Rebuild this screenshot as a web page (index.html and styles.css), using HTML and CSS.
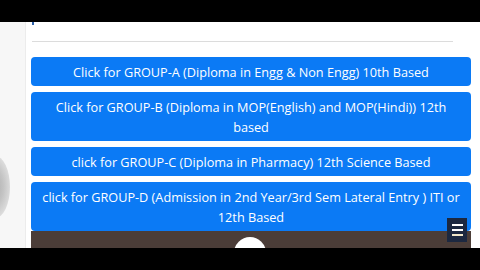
FILE: index.html
```html
<!DOCTYPE html>
<html>
<head>
<meta charset="utf-8">
<link rel="stylesheet" href="styles.css">
</head>
<body>
<div class="screen">
  <div class="topbar"></div>
  <div class="page">
    <div class="left-strip"><div class="blob"></div></div>
    <div class="content">
      <div class="tick"></div>
      <div class="rule"></div>
      <div class="buttons">
        <a class="btn">Click for GROUP-A (Diploma in Engg &amp; Non Engg) 10th Based</a>
        <a class="btn">Click for GROUP-B (Diploma in MOP(English) and MOP(Hindi)) 12th based</a>
        <a class="btn">click for GROUP-C (Diploma in Pharmacy) 12th Science Based</a>
        <a class="btn">click for GROUP-D (Admission in 2nd Year/3rd Sem Lateral Entry ) ITI or 12th Based</a>
      </div>
      <div class="player"><div class="circle"></div></div>
      <div class="menu-btn">
        <span></span><span></span><span class="last"></span>
      </div>
    </div>
    <div class="right-strip"></div>
  </div>
  <div class="bottombar"></div>
</div>
</body>
</html>
```
FILE: styles.css
```css
html, body {
  margin: 0;
  padding: 0;
  background: #000;
}
.screen {
  width: 480px;
  height: 270px;
  overflow: hidden;
  display: flex;
  flex-direction: column;
  font-family: "Open Sans", "Noto Sans", sans-serif;
}
.topbar {
  height: 22px;
  background: #000;
  flex: none;
}
.page {
  height: 226px;
  display: flex;
  background: #fff;
  flex: none;
}
.left-strip {
  width: 25px;
  background: #f7f7f7;
  border-right: 1px solid #ececec;
  position: relative;
  overflow: hidden;
  flex: none;
}
.blob {
  position: absolute;
  left: -20px;
  top: 134px;
  width: 30px;
  height: 62px;
  border-radius: 50%;
  background: radial-gradient(ellipse at 40% 50%, #a8a8a8 0%, #c4c4c4 45%, #dedede 75%, rgba(240,240,240,0) 100%);
}
.content {
  width: 440px;
  margin-left: 5px;
  position: relative;
  flex: none;
}
.tick {
  width: 2px;
  height: 3px;
  margin-left: 1px;
  background: #2b5fa8;
}
.rule {
  height: 1px;
  background: #dcdcdc;
  margin: 16px 18px 0 1px;
}
.buttons {
  margin-top: 15px;
  display: flex;
  flex-direction: column;
  gap: 6px;
}
.btn {
  display: block;
  background: #0b7af5;
  color: #fff;
  border-radius: 4px;
  text-align: center;
  font-size: 12.7px;
  line-height: 20px;
  padding: 4.5px 10px;
}
.player {
  height: 17px;
  background: #4b3d38;
  position: relative;
  overflow: hidden;
}
.circle {
  position: absolute;
  left: 203px;
  top: 6px;
  width: 32px;
  height: 32px;
  border-radius: 50%;
  background: #fff;
}
.menu-btn {
  position: absolute;
  left: 416px;
  top: 196px;
  width: 20px;
  height: 24px;
  background: #1c2840;
  display: flex;
  flex-direction: column;
  align-items: center;
  justify-content: center;
  gap: 3px;
}
.menu-btn span {
  display: block;
  width: 11px;
  height: 2px;
  background: #fff;
}
.menu-btn span.last {
  background: #f1e6c8;
}
.right-strip {
  flex: 1;
  background: #fff;
}
.bottombar {
  flex: 1;
  background: #000;
}
```
